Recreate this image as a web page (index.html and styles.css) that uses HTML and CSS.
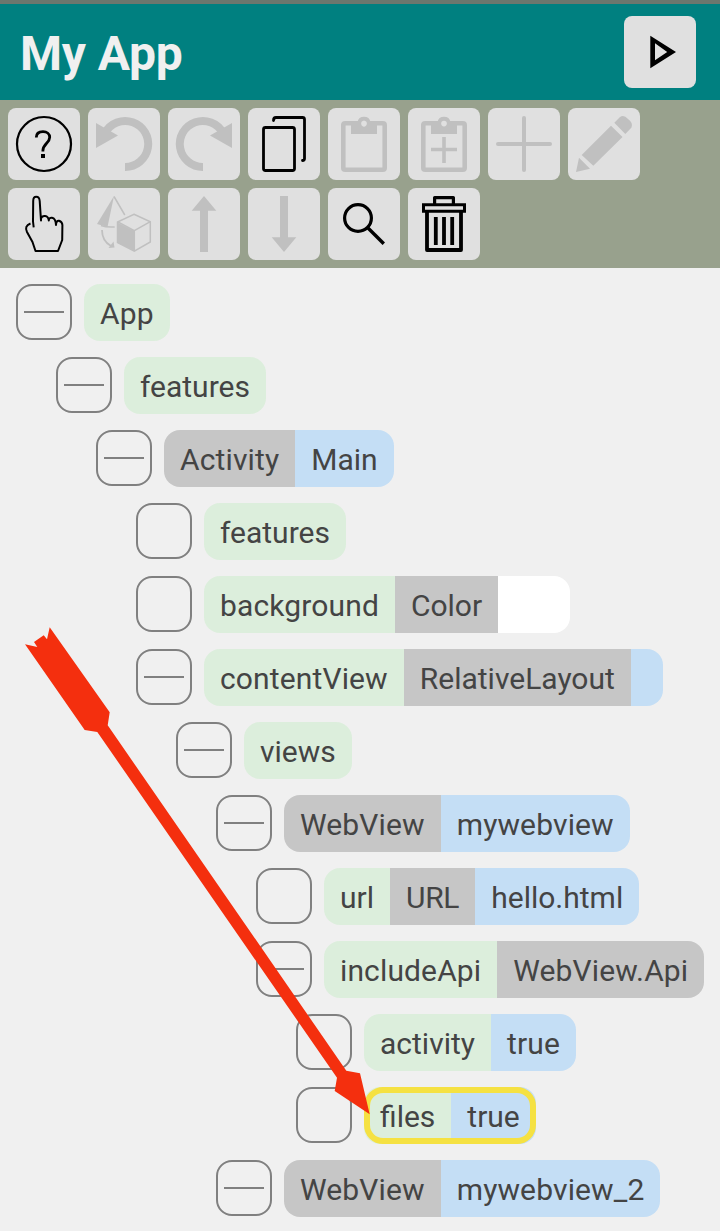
FILE: index.html
```html
<!DOCTYPE html>
<html lang="en">
<head>
<meta charset="utf-8">
<title>My App</title>
<link rel="stylesheet" href="styles.css">
</head>
<body>
<div class="status-strip"></div>
<header class="header">
  <h1 class="title">My App</h1>
  <button class="tool" aria-label="Run"><svg viewBox="0 0 72 72"><path class="solid" fill-rule="evenodd" d="M26.3 19.7 52 36 26.3 52.3ZM31 27.3V44.3L43.2 36Z"/></svg></button>
</header>
<nav class="toolbar">
  <button class="tool" aria-label="Help"><svg viewBox="0 0 72 72"><circle cx="36" cy="36" r="27" stroke-width="2.2"/><path stroke-width="2.8" d="M28.3 29.5C28.3 25.6 31 23.6 35 23.6S41.7 26 41.7 29.3C41.7 35 34.9 35.6 34.9 42.8V43.5"/><path class="solid" d="M33 46h4v4h-4z"/></svg></button>
  <button class="tool off" aria-label="Undo"><svg viewBox="0 0 72 72"><path stroke-width="8" d="M37 59A23 23 0 1 0 17 25"/><path class="solid" d="M8 15 30 27.5 8 40Z"/></svg></button>
  <button class="tool off" aria-label="Redo"><svg viewBox="0 0 72 72"><path stroke-width="8" d="M35 59A23 23 0 1 1 55 25"/><path class="solid" d="M64 15 42 27.5 64 40Z"/></svg></button>
  <button class="tool" aria-label="Copy"><svg viewBox="0 0 72 72"><rect x="15.5" y="19.5" width="31" height="43" rx="2" stroke-width="2.8"/><path stroke-width="2.8" stroke-linecap="round" d="M25.5 12.5Q25.5 9.5 28 9.5H54.5Q56.5 9.5 56.5 11.5V50.5Q56.5 52.5 54.5 52.5"/></svg></button>
  <button class="tool off" aria-label="Paste"><svg viewBox="0 0 72 72"><rect x="15.3" y="15.3" width="41.4" height="46.4" rx="1.8" stroke-width="4.6"/><path class="solid" fill-rule="evenodd" d="M23 14H29.5A6.6 6.4 0 0 1 42.5 14H49V26H23ZM36 12.8a2.8 2.8 0 1 0 0 5.6a2.8 2.8 0 1 0 0-5.6Z"/><circle class="hole" cx="36" cy="15.6" r="2.8"/></svg></button>
  <button class="tool off" aria-label="Paste into"><svg viewBox="0 0 72 72"><rect x="15.3" y="15.3" width="41.4" height="46.4" rx="1.8" stroke-width="4.6"/><path class="solid" d="M23 14H29.5A6.6 6.4 0 0 1 42.5 14H49V26H23Z"/><circle class="hole" cx="36" cy="15.6" r="2.8"/><path stroke-width="3.6" d="M23 41.5H49M36 29V55"/></svg></button>
  <button class="tool off" aria-label="Add"><svg viewBox="0 0 72 72"><path stroke-width="4" stroke-linecap="round" d="M10 36H62M36 10V62"/></svg></button>
  <button class="tool off" aria-label="Edit"><svg viewBox="0 0 72 72"><path class="solid" d="M8 64 11 49.7 22 60.7ZM13.7 47 43 17.7 54.5 29 25.3 57.7ZM46.3 14.7 52 9Q56 6.5 60 11Q65.5 15 63.5 19.5L57.3 26Z"/></svg></button>
  <button class="tool" aria-label="Touch"><svg viewBox="0 0 72 72"><path stroke-width="2" stroke-linejoin="round" d="M25.7 39.3 25 33.5 25.2 13Q25.2 8.8 28.2 8.8Q31.4 8.8 31.7 13L33 32.5V30.5Q34 27.7 37 28Q40.5 28.5 40.8 32.5Q41 29.5 44 29.8Q47.7 30.5 48 37Q48.2 32.3 51 32.8Q54.3 34 54.4 37L54.2 52 50 63H27.5L24.5 54 19 44Q16 38 22.5 35.5"/></svg></button>
  <button class="tool off" aria-label="Convert"><svg viewBox="0 0 72 72"><path class="solid" d="M26 8 9 36 19.5 39Z"/><path stroke-width="1.5" d="M26 8.5 36.8 27M13 37.5Q18 39.5 26.7 39M46 26.3 62.3 33.7V54L46.3 63.2 29.5 54.5V34ZM30 34 46.3 42.7 62.3 33.7M46.3 42.7V63"/><path class="solid" d="M29.3 34.5 46.5 43V63L29.3 54.5Z"/><path stroke-width="1.8" d="M14 42Q14 53 23 58"/><path class="solid" d="M20.5 60 25.5 53.5 26.5 59.5Z"/></svg></button>
  <button class="tool off" aria-label="Move up"><svg viewBox="0 0 72 72"><path class="solid" d="M36 8 48.3 22.7H40V64H32V22.7H23.7Z"/></svg></button>
  <button class="tool off" aria-label="Move down"><svg viewBox="0 0 72 72"><path class="solid" d="M36 64 48.3 49.3H40V8H32V49.3H23.7Z"/></svg></button>
  <button class="tool" aria-label="Search"><svg viewBox="0 0 72 72"><circle cx="30" cy="30" r="13.4" stroke-width="3.2"/><path stroke-width="3.4" d="M39.5 39.5 55.8 55.8"/></svg></button>
  <button class="tool" aria-label="Delete"><svg viewBox="0 0 72 72"><path stroke-width="3.2" stroke-linejoin="round" d="M26.6 16V9.6H45.4V16"/><path stroke-width="3" d="M15.5 16.7H56.5V23.2H15.5Z"/><path stroke-width="3.8" stroke-linejoin="round" d="M19 24V62H53V24M27.8 29V57M36 29V57M44.2 29V57"/></svg></button>
</nav>
<main class="tree">
  <div class="row"><span class="toggle open"></span><div class="pill"><span class="prop wide">App</span></div></div>
  <div class="row level-1"><span class="toggle open"></span><div class="pill"><span class="prop">features</span></div></div>
  <div class="row level-2"><span class="toggle open"></span><div class="pill"><span class="type wide">Activity</span><span class="value">Main</span></div></div>
  <div class="row level-3"><span class="toggle"></span><div class="pill"><span class="prop">features</span></div></div>
  <div class="row level-3"><span class="toggle"></span><div class="pill"><span class="prop wide">background</span><span class="type">Color</span><span class="swatch"></span></div></div>
  <div class="row level-3"><span class="toggle open"></span><div class="pill"><span class="prop wide">contentView</span><span class="type">RelativeLayout</span><span class="value"></span></div></div>
  <div class="row level-4"><span class="toggle open"></span><div class="pill"><span class="prop">views</span></div></div>
  <div class="row level-5"><span class="toggle open"></span><div class="pill"><span class="type wide">WebView</span><span class="value wide">mywebview</span></div></div>
  <div class="row level-6"><span class="toggle"></span><div class="pill"><span class="prop">url</span><span class="type tight">URL</span><span class="value">hello.html</span></div></div>
  <div class="row level-6"><span class="toggle open"></span><div class="pill"><span class="prop wide">includeApi</span><span class="type wide">WebView.Api</span></div></div>
  <div class="row level-7"><span class="toggle"></span><div class="pill"><span class="prop">activity</span><span class="value wide">true</span></div></div>
  <div class="row level-7"><span class="toggle"></span><div class="pill selected"><span class="prop">files</span><span class="value">true</span></div></div>
  <div class="row level-5"><span class="toggle open"></span><div class="pill"><span class="type wide">WebView</span><span class="value wide">mywebview_2</span></div></div>
</main>
<svg class="pointer" viewBox="0 0 720 1231"><path d="M25 644.3 37.3 647 34 642 43.7 635.3 47 639.3 49.7 627.3 109.7 712.3 107.7 725.3 346.3 1070.7 360 1073.3 369.7 1114.3 334.7 1091 337 1077.7 97.3 732 84.7 730Z"/></svg>
</body>
</html>
```
FILE: styles.css
```css
* { box-sizing: border-box; }
body {
  margin: 0;
  height: 1231px;
  position: relative;
  overflow: hidden;
  background: #f0f0f0;
  font-family: Roboto, sans-serif;
}
.status-strip { height: 4px; background: #6b776e; }
.header {
  height: 96px;
  padding: 0 24px 0 20px;
  display: flex;
  align-items: center;
  justify-content: space-between;
  background: #008080;
}
.title { margin: 3px 0 0; font-size: 48px; font-weight: 700; line-height: 56px; letter-spacing: -0.15px; color: #f0f0f0; }
.toolbar {
  height: 168px;
  padding: 8px;
  display: flex;
  flex-wrap: wrap;
  align-content: flex-start;
  gap: 8px;
  background: #98a18d;
}
.tool {
  width: 72px;
  height: 72px;
  padding: 0;
  border: 0;
  border-radius: 8px;
  background: #e0e0e0;
  color: #000;
}
.tool.off { color: #c0c0c0; }
.tool svg { display: block; width: 72px; height: 72px; fill: none; stroke: currentColor; }
.tool .solid { fill: currentColor; stroke: none; }
.tool .hole { fill: #e0e0e0; stroke: none; }
.tree { padding: 16px; display: flex; flex-direction: column; gap: 16px; }
.row { height: 57px; display: flex; gap: 12px; }
.level-1 { padding-left: 40px; }
.level-2 { padding-left: 80px; }
.level-3 { padding-left: 120px; }
.level-4 { padding-left: 160px; }
.level-5 { padding-left: 200px; }
.level-6 { padding-left: 240px; }
.level-7 { padding-left: 280px; }
.toggle {
  flex: none;
  width: 56px;
  height: 56px;
  display: flex;
  align-items: center;
  justify-content: center;
  border: 2px solid #808080;
  border-radius: 16px;
}
.toggle.open::before { content: ""; width: 40px; height: 2px; background: #808080; }
.pill {
  position: relative;
  display: flex;
  border-radius: 16px;
  overflow: hidden;
  font-size: 30px;
  line-height: 60px;
  color: #444;
  white-space: nowrap;
}
.pill > span { padding: 0 16px; }
.wide { letter-spacing: 0.13px; }
.tight { letter-spacing: -0.3px; }
.prop { background: #dceedc; }
.type { background: #c6c6c6; }
.value { background: #c4def5; }
.swatch { width: 72px; background: #fff; }
.selected::after {
  content: "";
  position: absolute;
  inset: 0;
  border: 6px solid #f5e142;
  border-radius: 19px;
}
.pointer { position: absolute; left: 0; top: 0; width: 720px; height: 1231px; fill: #f42f0e; pointer-events: none; }
```
